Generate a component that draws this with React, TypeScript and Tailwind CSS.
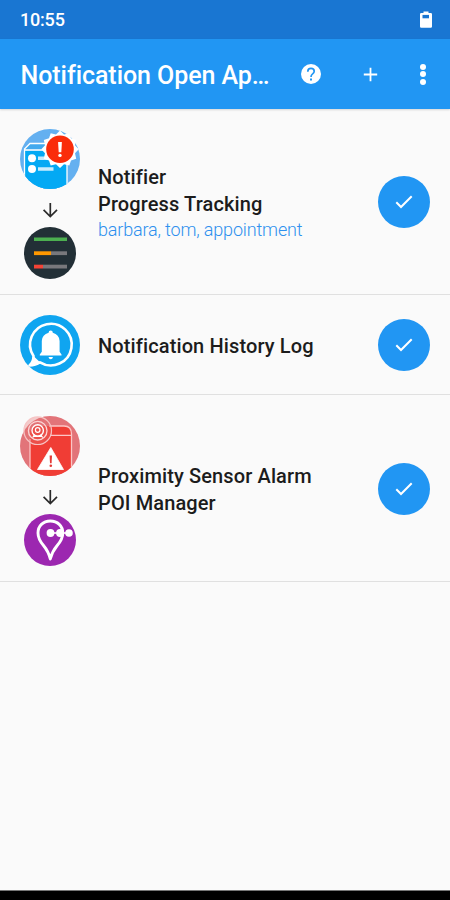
import React from 'react';

interface Rule {
  id: number;
  icon: React.ReactNode;
  target?: React.ReactNode;
  titles: string[];
  keywords?: string;
  className: string;
  textClassName: string;
  buttonClassName: string;
}

const NotifierIcon: React.FC = () => (
  <svg viewBox="0 0 60 60" className="w-[60px] h-[60px]">
    <defs>
      <clipPath id="notifier-clip"><circle cx="30" cy="30" r="30" /></clipPath>
    </defs>
    <g clipPath="url(#notifier-clip)">
      <rect width="60" height="60" fill="#64b0f0" />
      <path d="M5 19 L10 14.500 H45 L47 19 V60 H5Z" fill="#42a9ee" />
      <path d="M5 22 H47 V60 H5Z" fill="#03a9f4" />
      <path d="M4.500 60 V20 L10 14.500 H30 M4.500 21 H30 M47 32 V60" fill="none" stroke="#fff" strokeWidth="1.300" />
      <circle cx="12" cy="29.300" r="4" fill="#fff" />
      <circle cx="12" cy="40" r="4" fill="#fff" />
      <path d="M18 29.300 H27 M18 40 H33.500" stroke="#c9ecfd" strokeWidth="3.600" />
    </g>
    <path
      d="M40 39 L36 35.300 L30.700 36.500 L29 31.400 L23.800 29.700 L25 24.300 L21.300 20.300 L25 16.300 L23.800 11 L29 9.300 L30.700 4.200 L36 5.400 L40 1.600 L44 5.400 L49.300 4.200 L51 9.300 L56.200 11 L55 16.300 L58.700 20.300 L55 24.300 L56.200 29.700 L51 31.400 L49.300 36.500 L44 35.300Z"
      fill="#fff"
    />
    <circle cx="40" cy="20.300" r="13.800" fill="#fa2c0a" />
    <path d="M38.100 13 H41.900 L41.300 23.200 H38.700Z" fill="#fff" />
    <circle cx="40" cy="26.400" r="1.700" fill="#fff" />
  </svg>
);

const ProgressIcon: React.FC = () => (
  <svg viewBox="0 0 52 52" className="w-[52px] h-[52px]">
    <circle cx="26" cy="26" r="26" fill="#222f36" />
    <path d="M10 12.300 H43" stroke="#4caf50" strokeWidth="3.600" />
    <path d="M10 26.200 H27" stroke="#ff9800" strokeWidth="3.800" />
    <path d="M27 26.200 H43" stroke="#78787c" strokeWidth="3.800" />
    <path d="M10 39.600 H19" stroke="#f44336" strokeWidth="3.800" />
    <path d="M19 39.600 H43" stroke="#78787c" strokeWidth="3.800" />
  </svg>
);

const HistoryIcon: React.FC = () => (
  <svg viewBox="0 0 60 60" className="w-[60px] h-[60px]">
    <circle cx="30" cy="30" r="30" fill="#0fa5f0" />
    <path
      d="M20 47.300 A20.800 20.800 0 1 0 13.500 41 Q13.500 47 9.500 50.500 Q15.500 50.500 20 47.300Z"
      fill="none"
      stroke="#fff"
      strokeWidth="2.600"
      strokeLinejoin="round"
    />
    <path d="M13.500 41 Q13.500 47 9.500 50.500 Q15.500 50.500 20 47.300Z" fill="#fff" />
    <path
      d="M28.600 17.800 Q28.600 15.600 30.700 15.600 Q32.800 15.600 32.800 17.800 Q39.200 19.500 39.600 26 V36.800 L41.500 39.500 V40.500 H19.800 V39.500 L21.800 36.800 V26 Q22.200 19.500 28.600 17.800Z"
      fill="#fff"
    />
    <path d="M28.500 42 H33 Q32.500 44.300 30.700 44.300 Q29 44.300 28.500 42Z" fill="#fff" />
  </svg>
);

const ProximityIcon: React.FC = () => (
  <svg viewBox="0 0 60 60" className="w-[60px] h-[60px]">
    <defs>
      <clipPath id="proximity-clip"><circle cx="30" cy="30" r="30" /></clipPath>
    </defs>
    <g clipPath="url(#proximity-clip)">
      <rect width="60" height="60" fill="#e27479" />
      <path d="M10 60 V18 Q10 10 18 10 H44 Q51.500 10 51.500 18 V60Z" fill="#f03d35" />
      <path d="M10 60 V23 M29 10 H44 Q51.500 10 51.500 18 V60 M30 19.300 H51" fill="none" stroke="#fcc5c5" strokeWidth="1.300" />
    </g>
    <circle cx="17.700" cy="14.700" r="13.800" fill="#e57373" fillOpacity="0.350" stroke="#f6c3c3" strokeWidth="1.200" />
    <circle cx="17.700" cy="14.700" r="9.300" fill="none" stroke="#fbd5d5" strokeWidth="1.300" />
    <circle cx="17.700" cy="14.500" r="5.700" fill="none" stroke="#fff" strokeWidth="1.400" />
    <circle cx="17.700" cy="14" r="2.300" fill="none" stroke="#fff" strokeWidth="1.200" />
    <path d="M14.500 18.500 L12.800 21.500 M20.700 18.500 L22.600 21.500 M14 20.300 H21.500" stroke="#fff" strokeWidth="1.200" />
    <path d="M30.800 31.500 L43.500 53.500 H17.500Z" fill="#fff" stroke="#fff" strokeWidth="0.800" strokeLinejoin="round" />
    <path d="M29.600 39.500 H32 L31.600 47.300 H30Z" fill="#e53935" />
    <circle cx="30.800" cy="49.800" r="1.300" fill="#e53935" />
  </svg>
);

const PoiIcon: React.FC = () => (
  <svg viewBox="0 0 52 52" className="w-[52px] h-[52px]">
    <circle cx="26" cy="26" r="26" fill="#9c27b0" />
    <path
      d="M26.300 45 Q24.500 37.500 19.500 31.500 Q14 25 14 19 C14 12 19 7 26.300 7 C33.500 7 38.800 12 38.800 19 Q38.800 25 33.200 31.500 Q28.200 37.500 26.300 45Z"
      fill="none"
      stroke="#fff"
      strokeWidth="2.900"
      strokeLinejoin="round"
    />
    <path d="M26 19 H45" stroke="#fff" strokeWidth="1.600" />
    <circle cx="26.500" cy="19" r="3.900" fill="#fff" />
    <circle cx="36" cy="19" r="3.900" fill="#fff" />
    <circle cx="45" cy="19" r="3.800" fill="#fff" />
  </svg>
);

const DownArrow: React.FC = () => (
  <svg viewBox="0 0 16 16" className="w-4 h-4" fill="none" stroke="#2a2a2a" strokeWidth="1.700">
    <path d="M8.300 1 V14.300 M1.600 7.900 L8.300 14.600 L15 7.900" />
  </svg>
);

const rules: Rule[] = [
  {
    id: 1,
    icon: <NotifierIcon />,
    target: <ProgressIcon />,
    titles: ['Notifier', 'Progress Tracking'],
    keywords: 'barbara, tom, appointment',
    className: 'h-[186px] pt-5 pb-[15px]',
    textClassName: '-mt-[2px]',
    buttonClassName: '-mt-[5px]',
  },
  {
    id: 2,
    icon: <HistoryIcon />,
    titles: ['Notification History Log'],
    className: 'h-[100px] pt-5 pb-[19px]',
    textClassName: 'mt-[2px]',
    buttonClassName: '',
  },
  {
    id: 3,
    icon: <ProximityIcon />,
    target: <PoiIcon />,
    titles: ['Proximity Sensor Alarm', 'POI Manager'],
    className: 'h-[187px] pt-[21px] pb-[15px]',
    textClassName: '-mt-[2px]',
    buttonClassName: '-mt-[5px]',
  },
];

const RuleRow: React.FC<{ rule: Rule }> = ({ rule }) => (
  <li className={`flex items-center pl-5 pr-5 border-b border-[#e0e0e0] ${rule.className}`}>
    <div className="w-[60px] flex flex-col items-center shrink-0">
      {rule.icon}
      {rule.target && (
        <>
          <div className="h-[38px] pt-[3px] flex items-center">
            <DownArrow />
          </div>
          {rule.target}
        </>
      )}
    </div>
    <div className={`ml-[18px] flex-1 whitespace-nowrap ${rule.textClassName}`}>
      {rule.titles.map(title => (
        <p key={title} className="text-[20px] leading-[27px] tracking-[0.120px] font-medium text-[#1c1c1c]">{title}</p>
      ))}
      {rule.keywords && (
        <p className="text-[18px] leading-6 tracking-[-0.160px] text-[#2e90ee] font-light">{rule.keywords}</p>
      )}
    </div>
    <button className={`w-[52px] h-[52px] rounded-full bg-[#2196f3] flex items-center justify-center shrink-0 ${rule.buttonClassName}`}>
      <svg viewBox="0 0 18 14" className="w-[18px] h-[14px]" fill="none" stroke="#fff" strokeWidth="2">
        <path d="M1.300 7.300 L6 12 L16.700 1.300" />
      </svg>
    </button>
  </li>
);

const App: React.FC = () => {
  return (
    <div className="w-[450px] h-[900px] flex flex-col overflow-hidden bg-[#fafafa] font-['Roboto',sans-serif]">
      {/* Status bar */}
      <div className="h-[39px] bg-[#1976d2] flex items-center justify-between pl-5 pr-[18px] text-white">
        <span className="text-[18px] font-medium tracking-[-0.200px]">10:55</span>
        <svg viewBox="0 0 12 17" className="w-3 h-[17px]">
          <path d="M3.500 0.500 H8.500 V2 H10.800 Q12 2 12 3.200 V15.500 Q12 16.700 10.800 16.700 H1.200 Q0 16.700 0 15.500 V3.200 Q0 2 1.200 2 H3.500Z" fill="#fff" />
          <rect x="2.500" y="3.900" width="6.500" height="3.400" fill="#1976d2" />
        </svg>
      </div>

      {/* Toolbar */}
      <header className="h-[70px] bg-[#2196f3] flex items-center pl-5 text-white shadow-[0_1px_2px_rgba(0,0,0,0.15)]">
        <h1 className="w-[280px] pt-[3px] pl-[0.500px] text-[25px] tracking-[-0.060px] font-medium whitespace-nowrap">Notification Open Ap…</h1>
        <button className="ml-[0.500px] w-5 h-5 rounded-full bg-white flex items-center justify-center">
          <svg viewBox="0 0 20 20" className="w-5 h-5" fill="none" stroke="#2196f3" strokeWidth="1.700">
            <path d="M6.800 7.700 Q6.800 4.400 10 4.400 Q13.200 4.400 13.200 7.300 Q13.200 8.700 11.600 9.900 Q10 11 10 13" />
            <path d="M9 15.600 H11" strokeWidth="2" />
          </svg>
        </button>
        <button className="ml-[42.500px] w-[15px] h-[15px]">
          <svg viewBox="0 0 15 15" className="w-[15px] h-[15px]" stroke="#fff" strokeWidth="1.800">
            <path d="M7.500 0.800 V14.200 M0.800 7.500 H14.200" />
          </svg>
        </button>
        <button className="ml-[42px] w-[6px] flex flex-col gap-[1.500px]">
          <span className="w-[6px] h-[6px] rounded-full bg-white" />
          <span className="w-[6px] h-[6px] rounded-full bg-white" />
          <span className="w-[6px] h-[6px] rounded-full bg-white" />
        </button>
      </header>

      <ul className="flex-1">
        {rules.map(rule => (
          <RuleRow key={rule.id} rule={rule} />
        ))}
      </ul>

      <div className="h-[10px] bg-black border-t border-[#777]" />
    </div>
  );
};

export default App;
